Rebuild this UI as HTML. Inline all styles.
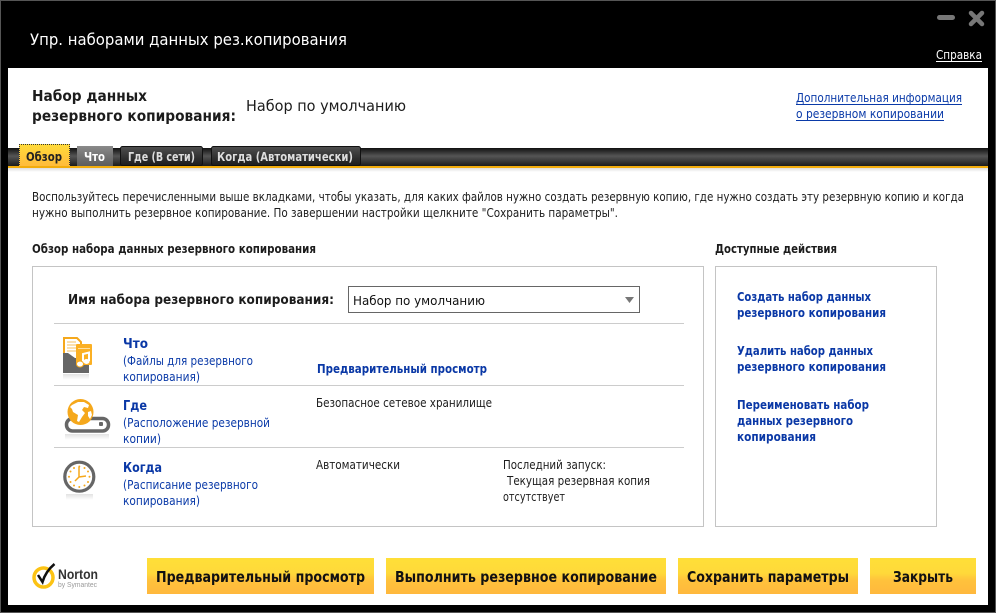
<!DOCTYPE html>
<html lang="ru"><head><meta charset="utf-8"><title>Упр. наборами данных</title>
<style>
html,body{margin:0;padding:0;width:996px;height:613px;overflow:hidden;background:#000}
svg{display:block}
text{font-family:"DejaVu Sans","Liberation Sans",sans-serif;font-size:12px;fill:#1c1c1c}
.b{font-weight:bold}
.l{fill:#0a3aa8}
.lb{fill:#0a38a6;font-weight:bold}
.btn{font-size:15px;font-weight:bold;fill:#111}
.tab{font-size:12px;font-weight:bold;fill:#ddd}
</style></head><body>
<svg width="996" height="613" viewBox="0 0 996 613" xmlns="http://www.w3.org/2000/svg">
<defs>
<linearGradient id="bar" x1="0" y1="0" x2="0" y2="1"><stop offset="0" stop-color="#111"/><stop offset=".45" stop-color="#555"/><stop offset="1" stop-color="#1c1c1c"/></linearGradient>
<linearGradient id="btn" x1="0" y1="0" x2="0" y2="1"><stop offset="0" stop-color="#ffdf38"/><stop offset=".42" stop-color="#ffd93a"/><stop offset=".62" stop-color="#ffc23c"/><stop offset="1" stop-color="#ffb83d"/></linearGradient>
<linearGradient id="tabY" x1="0" y1="0" x2="0" y2="1"><stop offset="0" stop-color="#ffdb3a"/><stop offset="1" stop-color="#ffbb3b"/></linearGradient>
<linearGradient id="tabG" x1="0" y1="0" x2="0" y2="1"><stop offset="0" stop-color="#8a8a8a"/><stop offset="1" stop-color="#5c5c5c"/></linearGradient>
<linearGradient id="tabD" x1="0" y1="0" x2="0" y2="1"><stop offset="0" stop-color="#4e4e4e"/><stop offset="1" stop-color="#1c1c1c"/></linearGradient>
<linearGradient id="sh" x1="0" y1="0" x2="0" y2="1"><stop offset="0" stop-color="#ddd"/><stop offset="1" stop-color="#fff"/></linearGradient>
<linearGradient id="ref" x1="0" y1="0" x2="0" y2="1"><stop offset="0" stop-color="#e2e2e2"/><stop offset="1" stop-color="#fff"/></linearGradient>
</defs>

<rect width="996" height="613" fill="#555"/>
<rect x="1" y="1" width="994" height="611" fill="#000"/>
<rect x="8" y="68" width="980" height="537" fill="#fff"/>

<text x="30" y="45" style="font-size:16px;fill:#fff" textLength="317" lengthAdjust="spacingAndGlyphs">Упр. наборами данных рез.копирования</text>
<rect x="937" y="15" width="18" height="5" rx="2.5" fill="#777"/>
<path d="M971 13L982 24M982 13L971 24" stroke="#777" stroke-width="4.5" stroke-linecap="round"/>
<text x="936" y="59" style="fill:#fff" textLength="46" lengthAdjust="spacingAndGlyphs">Справка</text>
<rect x="936" y="61" width="46" height="1" fill="#fff"/>

<text x="32" y="101" class="b" style="font-size:15px" textLength="115" lengthAdjust="spacingAndGlyphs">Набор данных</text>
<text x="32" y="121" class="b" style="font-size:15px" textLength="204" lengthAdjust="spacingAndGlyphs">резервного копирования:</text>
<text x="246" y="111" style="font-size:15px" textLength="160" lengthAdjust="spacingAndGlyphs">Набор по умолчанию</text>
<text x="796" y="102" class="l" textLength="166" lengthAdjust="spacingAndGlyphs">Дополнительная информация</text>
<rect x="796" y="104" width="166" height="1" fill="#0a3aa8"/>
<text x="796" y="118" class="l" textLength="148" lengthAdjust="spacingAndGlyphs">о резервном копировании</text>
<rect x="796" y="120" width="148" height="1" fill="#0a3aa8"/>

<rect x="8" y="148" width="980" height="18" fill="url(#bar)"/>
<rect x="8" y="166" width="980" height="2" fill="#f2ac0c"/>
<rect x="8" y="168" width="980" height="4" fill="url(#sh)"/>

<rect x="19" y="144" width="51" height="22" fill="url(#tabY)"/>
<path d="M19 144.500H70M19.500 144V166M69.500 144V166" fill="none" stroke="#333" stroke-dasharray="1 1"/>
<text x="26" y="161" class="b" style="fill:#222" textLength="36" lengthAdjust="spacingAndGlyphs">Обзор</text>
<rect x="77" y="146" width="36" height="20" fill="url(#tabG)"/>
<text x="84" y="161" class="b" style="fill:#fff" textLength="21" lengthAdjust="spacingAndGlyphs">Что</text>
<rect x="120.500" y="146.500" width="82" height="19" rx="2" fill="url(#tabD)" stroke="#111"/>
<text x="128" y="161" class="tab" textLength="67" lengthAdjust="spacingAndGlyphs">Где (В сети)</text>
<rect x="211.500" y="146.500" width="149" height="19" rx="2" fill="url(#tabD)" stroke="#111"/>
<text x="217" y="161" class="tab" textLength="136" lengthAdjust="spacingAndGlyphs">Когда (Автоматически)</text>

<text x="32" y="201" textLength="932" lengthAdjust="spacingAndGlyphs">Воспользуйтесь перечисленными выше вкладками, чтобы указать, для каких файлов нужно создать резервную копию, где нужно создать эту резервную копию и когда</text>
<text x="32" y="217" textLength="586" lengthAdjust="spacingAndGlyphs">нужно выполнить резервное копирование. По завершении настройки щелкните "Сохранить параметры".</text>

<text x="32" y="253" class="b" textLength="284" lengthAdjust="spacingAndGlyphs">Обзор набора данных резервного копирования</text>
<text x="715" y="253" class="b" textLength="122" lengthAdjust="spacingAndGlyphs">Доступные действия</text>

<rect x="32.500" y="266.500" width="671" height="260" fill="#fff" stroke="#c4c4c4"/>
<rect x="715.500" y="266.500" width="221" height="260" fill="#fff" stroke="#c4c4c4"/>

<text x="68" y="304" class="b" style="font-size:13px" textLength="266" lengthAdjust="spacingAndGlyphs">Имя набора резервного копирования:</text>
<rect x="348.500" y="286.500" width="291" height="26" fill="#fff" stroke="#666"/>
<text x="353" y="305" style="fill:#111" textLength="132" lengthAdjust="spacingAndGlyphs">Набор по умолчанию</text>
<path d="M625 297h9l-4.500 6z" fill="#777"/>

<rect x="54" y="323" width="630" height="1" fill="#ccc"/>
<rect x="54" y="385" width="630" height="1" fill="#ccc"/>
<rect x="54" y="447" width="630" height="1" fill="#ccc"/>

<!-- what icon -->
<g>
<rect x="63" y="374" width="26" height="6" fill="url(#ref)"/>
<path d="M64 338h13l4 4v18H64z" fill="#fff" stroke="#f5a81c" stroke-width="2"/>
<path d="M67 342h9M67 345h11M67 348h11M67 351h11" stroke="#f5c060" stroke-width="1"/>
<path d="M63 353h5l7 5h14v15H63z" fill="#666"/>
<rect x="76" y="344" width="16" height="21" rx="1" fill="#fbb024"/>
<rect x="78" y="348" width="12" height="1" fill="#ffe0a0"/>
<path d="M83 363V354l6-1.500V361" fill="none" stroke="#fff" stroke-width="2"/>
<ellipse cx="80" cy="364" rx="3.500" ry="3" fill="#fff" stroke="#f5a81c"/>
<ellipse cx="86.500" cy="361.500" rx="3" ry="2.500" fill="#fff"/>
</g>
<!-- where icon -->
<g>
<rect x="65" y="434" width="44" height="6" fill="url(#ref)"/>
<rect x="66.500" y="418.500" width="42" height="12.500" rx="6" fill="#fff" stroke="#666" stroke-width="3.500"/>
<rect x="99" y="422" width="4" height="4" rx="1" fill="#666"/>
<circle cx="80.500" cy="412" r="13" fill="#f5a81c"/>
<path d="M72 405l6-3 6 0 5 3-1 3-4-1-2 3 3 3-3 4-3 5-2-1 1-6-5-3-1-3-2-2zM88 412l3-1 1 4-2 4-2-3z" fill="#fff"/>
</g>
<!-- when icon -->
<g>
<rect x="66" y="494" width="27" height="6" fill="url(#ref)"/>
<circle cx="79.300" cy="476.700" r="14.500" fill="#fff" stroke="#666" stroke-width="3.200"/>
<g fill="#f5a81c"><circle cx="79.300" cy="466.500" r="1"/><circle cx="79.300" cy="487" r="1"/><circle cx="69" cy="476.700" r="1"/><circle cx="89.500" cy="476.700" r="1"/><circle cx="74" cy="468" r="1"/><circle cx="84.500" cy="468" r="1"/><circle cx="70.500" cy="471.500" r="1"/><circle cx="88" cy="471.500" r="1"/><circle cx="70.500" cy="482" r="1"/><circle cx="88" cy="482" r="1"/><circle cx="74" cy="485.500" r="1"/><circle cx="84.500" cy="485.500" r="1"/></g>
<path d="M79 467v10l7-1M79 477l-4 4" stroke="#f5a81c" stroke-width="1.500" fill="none"/>
</g>

<text x="123" y="348" class="lb" style="font-size:13px" textLength="25" lengthAdjust="spacingAndGlyphs">Что</text>
<text x="123" y="365" class="l" textLength="130" lengthAdjust="spacingAndGlyphs">(Файлы для резервного</text>
<text x="123" y="381" class="l" textLength="77" lengthAdjust="spacingAndGlyphs">копирования)</text>
<text x="123" y="410" class="lb" style="font-size:13px" textLength="24" lengthAdjust="spacingAndGlyphs">Где</text>
<text x="123" y="427" class="l" textLength="147" lengthAdjust="spacingAndGlyphs">(Расположение резервной</text>
<text x="123" y="443" class="l" textLength="38" lengthAdjust="spacingAndGlyphs">копии)</text>
<text x="123" y="472" class="lb" style="font-size:13px" textLength="39" lengthAdjust="spacingAndGlyphs">Когда</text>
<text x="123" y="489" class="l" textLength="135" lengthAdjust="spacingAndGlyphs">(Расписание резервного</text>
<text x="123" y="505" class="l" textLength="77" lengthAdjust="spacingAndGlyphs">копирования)</text>

<text x="317" y="373" class="lb" textLength="170" lengthAdjust="spacingAndGlyphs">Предварительный просмотр</text>
<text x="316" y="407" textLength="176" lengthAdjust="spacingAndGlyphs">Безопасное сетевое хранилище</text>
<text x="316" y="469" textLength="84" lengthAdjust="spacingAndGlyphs">Автоматически</text>
<text x="503" y="469" textLength="103" lengthAdjust="spacingAndGlyphs">Последний запуск:</text>
<text x="507" y="485" textLength="143" lengthAdjust="spacingAndGlyphs">Текущая резервная копия</text>
<text x="503" y="501" textLength="62" lengthAdjust="spacingAndGlyphs">отсутствует</text>

<text x="737" y="301" class="lb" textLength="134" lengthAdjust="spacingAndGlyphs">Создать набор данных</text>
<text x="737" y="317" class="lb" textLength="149" lengthAdjust="spacingAndGlyphs">резервного копирования</text>
<text x="737" y="355" class="lb" textLength="136" lengthAdjust="spacingAndGlyphs">Удалить набор данных</text>
<text x="737" y="371" class="lb" textLength="149" lengthAdjust="spacingAndGlyphs">резервного копирования</text>
<text x="737" y="409" class="lb" textLength="132" lengthAdjust="spacingAndGlyphs">Переименовать набор</text>
<text x="737" y="425" class="lb" textLength="116" lengthAdjust="spacingAndGlyphs">данных резервного</text>
<text x="737" y="441" class="lb" textLength="79" lengthAdjust="spacingAndGlyphs">копирования</text>

<!-- norton -->
<circle cx="43.500" cy="577.500" r="9.500" fill="#fff" stroke="#fcc314" stroke-width="3.500"/>
<path d="M38 575l4.500 7c2-7 6-13 12-18" fill="none" stroke="#111" stroke-width="2.500"/>
<text x="58" y="579" style="font-size:14px;font-weight:bold;fill:#333;font-family:'Liberation Sans',sans-serif" textLength="40" lengthAdjust="spacingAndGlyphs">Norton</text>
<text x="58" y="587" style="font-size:7.500px;fill:#999;font-family:'Liberation Sans',sans-serif" textLength="39" lengthAdjust="spacingAndGlyphs">by Symantec</text>

<rect x="147" y="558" width="227" height="36" fill="url(#btn)"/>
<rect x="386" y="558" width="280" height="36" fill="url(#btn)"/>
<rect x="678" y="558" width="180" height="36" fill="url(#btn)"/>
<rect x="870" y="558" width="106" height="36" fill="url(#btn)"/>
<text x="156" y="582" class="btn" textLength="209" lengthAdjust="spacingAndGlyphs">Предварительный просмотр</text>
<text x="395" y="582" class="btn" textLength="262" lengthAdjust="spacingAndGlyphs">Выполнить резервное копирование</text>
<text x="687" y="582" class="btn" textLength="162" lengthAdjust="spacingAndGlyphs">Сохранить параметры</text>
<text x="893" y="582" class="btn" textLength="60" lengthAdjust="spacingAndGlyphs">Закрыть</text>
</svg>
</body></html>
